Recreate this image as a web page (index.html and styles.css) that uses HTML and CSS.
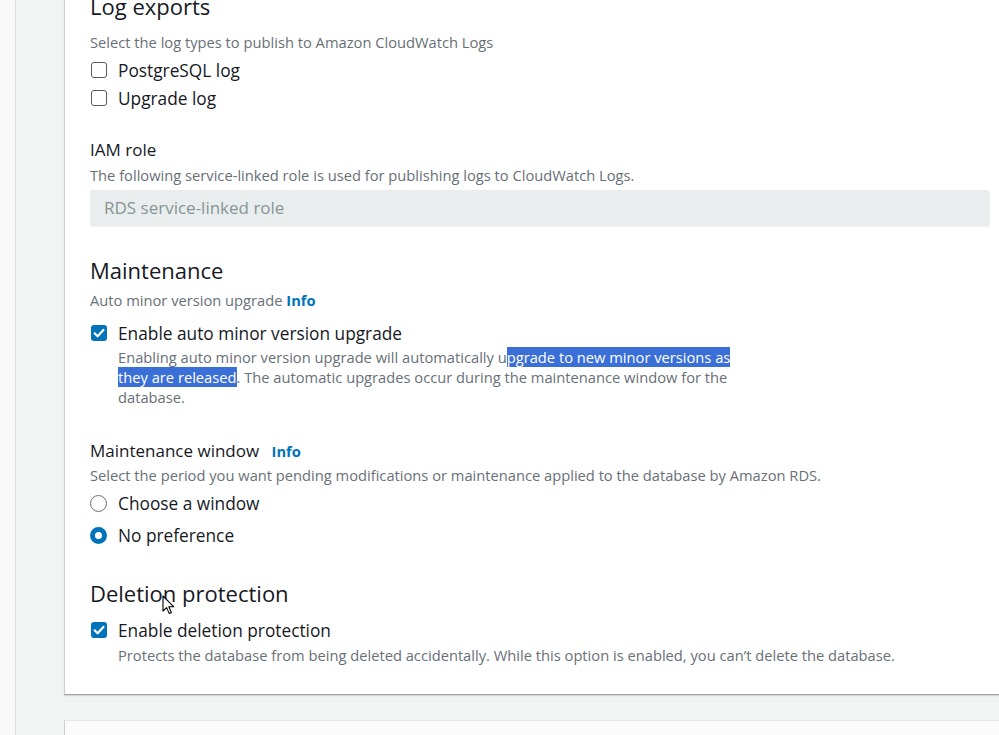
FILE: index.html
```html
<!DOCTYPE html>
<html>
<head>
<meta charset="utf-8">
<link rel="stylesheet" href="styles.css">
</head>
<body>
<div class="page">
  <div class="rail"></div>
  <div class="gutter"></div>
  <main class="main">
    <section class="card">
      <h2 class="h-section h-first">Log exports</h2>
      <p class="desc d-log">Select the log types to publish to Amazon CloudWatch Logs</p>
      <label class="check-row r-pg"><span class="cb"></span><span class="lbl">PostgreSQL log</span></label>
      <label class="check-row r-up"><span class="cb"></span><span class="lbl">Upgrade log</span></label>

      <div class="field-label f-iam">IAM role</div>
      <p class="desc d-iam">The following service-linked role is used for publishing logs to CloudWatch Logs.</p>
      <div class="input">RDS service-linked role</div>

      <h2 class="h-section h-maint">Maintenance</h2>
      <p class="desc d-auto">Auto minor version upgrade <a class="info">Info</a></p>
      <label class="check-row r-auto"><span class="cb checked"><svg viewBox="0 0 16 16" width="16" height="16"><path d="M3.6 8.3l3 3 5.8-6.4" fill="none" stroke="#fff" stroke-width="2.2" stroke-linecap="round" stroke-linejoin="round"/></svg></span><span class="lbl">Enable auto minor version upgrade</span></label>
      <p class="desc sub d-autodesc">Enabling auto minor version upgrade will automatically u<span class="sel">pgrade to new minor versions as </span><span class="sel">they are released</span>. The automatic upgrades occur during the maintenance window for the database.</p>

      <div class="field-label f-win">Maintenance window <a class="info info-gap">Info</a></div>
      <p class="desc d-win">Select the period you want pending modifications or maintenance applied to the database by Amazon RDS.</p>
      <label class="check-row r-choose"><span class="rb"></span><span class="lbl">Choose a window</span></label>
      <label class="check-row r-nopref"><span class="rb on"></span><span class="lbl">No preference</span></label>

      <h2 class="h-section h-del">Deletion protection</h2>
      <label class="check-row r-del"><span class="cb checked"><svg viewBox="0 0 16 16" width="16" height="16"><path d="M3.6 8.3l3 3 5.8-6.4" fill="none" stroke="#fff" stroke-width="2.2" stroke-linecap="round" stroke-linejoin="round"/></svg></span><span class="lbl">Enable deletion protection</span></label>
      <p class="desc sub d-deldesc">Protects the database from being deleted accidentally. While this option is enabled, you can’t delete the database.</p>
    </section>
    <section class="card card-next"></section>
  </main>
</div>
<svg class="cursor" width="14" height="20" viewBox="0 0 14 20"><path d="M1 1v15l3.6-3.4 2.6 5.8 2.2-1-2.6-5.6h5z" fill="#fff" stroke="#000" stroke-width="1.1" stroke-linejoin="round"/></svg>
</body>
</html>
```
FILE: styles.css
```css
html, body {
  margin: 0;
  padding: 0;
  height: 100%;
  overflow: hidden;
}
body {
  background: #f2f3f3;
  font-family: "Open Sans", "Noto Sans", sans-serif;
  color: #16191f;
  position: relative;
}
.page {
  display: flex;
  height: 735px;
}
.rail {
  width: 15px;
  flex: none;
  background: #f9f9f9;
  border-right: 1px solid #dcdcdc;
}
.gutter {
  width: 48px;
  flex: none;
}
.main {
  flex: none;
  width: 960px;
  display: flex;
  flex-direction: column;
  gap: 25px;
}
.card {
  background: #fff;
  border-left: 1px solid #c9cfd0;
  border-bottom: 1px solid #9aa4a6;
  box-shadow: 0 1px 1px rgba(0,29,50,.12);
  padding: 0 0 0 25px;
  margin-top: -12px;
  height: 707px;
  box-sizing: border-box;
  flex: none;
}
.card-next {
  margin-top: 0;
  height: 40px;
  background: #fbfbfb;
  border-top: 1px solid #e6e8e8;
  border-bottom: none;
  box-shadow: none;
}
.h-section {
  font-size: 22px;
  font-weight: 400;
  margin: 0;
  line-height: 28px;
}
.desc {
  font-size: 14.7px;
  color: #687078;
  margin: 0;
  line-height: 20px;
}
.field-label {
  font-size: 17px;
  line-height: 22px;
}
.check-row {
  display: flex;
  align-items: center;
  gap: 11px;
  height: 24px;
  padding-left: 1px;
}
.lbl {
  font-size: 17.3px;
  color: #16191f;
}
.cb {
  width: 16px;
  height: 16px;
  box-sizing: border-box;
  border: 1.5px solid #545b64;
  border-radius: 3px;
  flex: none;
  display: flex;
}
.cb.checked {
  border: none;
  background: #0073bb;
}
.rb {
  width: 17px;
  height: 17px;
  box-sizing: border-box;
  border: 1.5px solid #687078;
  border-radius: 50%;
  flex: none;
  margin-left: -1px;
}
.rb.on {
  border: 5px solid #0073bb;
  background: #fff;
}
.info {
  color: #0073bb;
  font-weight: 700;
  font-size: 14.7px;
}
.info-gap { margin-left: 8px; }
.sub {
  padding-left: 28px;
}
.d-autodesc {
  max-width: 626px;
}
.sel {
  background: #3b6fd8;
  color: #fff;
}
.input {
  width: 899px;
  height: 36px;
  box-sizing: border-box;
  background: #eaeded;
  color: #879596;
  font-size: 17px;
  line-height: 36px;
  padding-left: 14px;
  border-radius: 2px;
  box-shadow: 1px 1px 1px rgba(0,0,0,.06);
}
.h-first { margin-top: 4px; }
.d-log { margin-top: 12px; }
.r-pg { margin-top: 6px; }
.r-up { margin-top: 4px; }
.f-iam { margin-top: 29px; }
.d-iam { margin-top: 4px; }
.input { margin-top: 5px; }
.h-maint { margin-top: 30px; }
.d-auto { margin-top: 6px; }
.r-auto { margin-top: 11px; }
.d-autodesc { margin-top: 2px; }
.f-win { margin-top: 33px; }
.d-win { margin-top: 3px; }
.r-choose { margin-top: 6px; }
.r-nopref { margin-top: 8px; }
.h-del { margin-top: 32px; }
.r-del { margin-top: 11px; }
.d-deldesc { margin-top: 3px; }
.cursor {
  position: absolute;
  left: 162px;
  top: 595px;
}
```
